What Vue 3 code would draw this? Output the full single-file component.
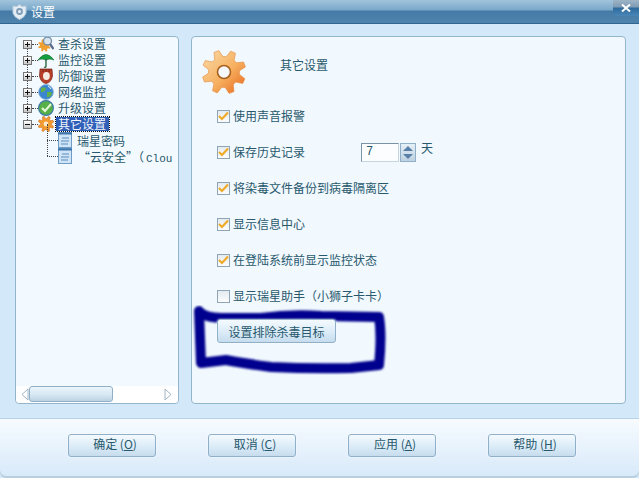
<script setup>
function gear(cx, cy, ro, ri, n) {
  const pts = []
  const step = (Math.PI * 2) / n
  for (let i = 0; i < n; i++) {
    const a = i * step - 0.25
    const list = [[ri, -0.5], [ro, -0.28], [ro, 0.02], [ri, 0.22]]
    for (const [r, o] of list) {
      const t = a + o * step
      pts.push((cx + r * Math.cos(t)).toFixed(1) + ',' + (cy + r * Math.sin(t)).toFixed(1))
    }
  }
  return pts.join(' ')
}
const bigGear = gear(22, 23, 22, 15.5, 8)
const smallGear = gear(8, 8, 8, 5.6, 8)
const nodes = [
  { label: '查杀设置', icon: 'scan' },
  { label: '监控设置', icon: 'umbrella' },
  { label: '防御设置', icon: 'glove' },
  { label: '网络监控', icon: 'globe' },
  { label: '升级设置', icon: 'update' }
]
const options = [
  { label: '使用声音报警', checked: true },
  { label: '保存历史记录', checked: true, spin: true },
  { label: '将染毒文件备份到病毒隔离区', checked: true },
  { label: '显示信息中心', checked: true },
  { label: '在登陆系统前显示监控状态', checked: true },
  { label: '显示瑞星助手（小狮子卡卡）', checked: false }
]
const buttons = [
  { label: '确定', key: 'O' },
  { label: '取消', key: 'C' },
  { label: '应用', key: 'A' },
  { label: '帮助', key: 'H' }
]
</script>

<template>
  <div class="window">
    <header class="titlebar">
      <svg class="title-icon" width="15" height="16" viewBox="0 0 15 16">
        <path d="M7.5 0.5 L10 2.5 L14 2 L14 9 Q13 13 7.5 15.5 Q2 13 1 9 L1 2 L5 2.5 Z" fill="#e4edf4" stroke="#b9cddd" />
        <circle cx="7.5" cy="7.5" r="3.4" fill="#7c9cb8" />
        <circle cx="7.5" cy="7.5" r="1.5" fill="#e8f0f6" />
      </svg>
      <span class="title-text">设置</span>
      <div class="close">
        <svg width="10" height="8" viewBox="0 0 10 8"><path d="M1 0.5 L9 7.5 M9 0.5 L1 7.5" stroke="#fff" stroke-width="2" /></svg>
      </div>
    </header>

    <main class="content">
      <aside class="tree-panel">
        <div class="tree">
          <div v-for="n in nodes" :key="n.label" class="node">
            <span class="expander"><i class="bar-h"></i><i class="bar-v"></i></span>
            <svg class="node-icon" width="16" height="16" viewBox="0 0 16 16">
              <template v-if="n.icon === 'scan'">
                <polygon :points="smallGear" fill="#f0a030" transform="translate(0 3) scale(.8)" />
                <circle cx="9.5" cy="5" r="4" fill="#d8e4ee" stroke="#7890a8" stroke-width="1.4" />
                <path d="M12 8 L15.5 13" stroke="#5a6a8a" stroke-width="2.2" />
              </template>
              <template v-else-if="n.icon === 'umbrella'">
                <path d="M0 8 Q8 -3 16 8 Q12 6 8 8 Q4 6 0 8 Z" fill="#14a040" stroke="#0b6a2a" stroke-width=".6" />
                <path d="M8 7 V14 Q8 16 6 15" stroke="#1c5a30" stroke-width="1.3" fill="none" />
              </template>
              <template v-else-if="n.icon === 'glove'">
                <path d="M2 1 L14 1 L14.5 8 Q13 15 8 15.5 Q3 15 1.5 8 Z" fill="#b8402a" stroke="#7a2416" stroke-width=".7" />
                <ellipse cx="8.4" cy="8" rx="3.4" ry="4" fill="#f6ece2" />
                <path d="M5 1 V4 M8 1 V4 M11 1 V4" stroke="#7a2416" />
              </template>
              <template v-else-if="n.icon === 'globe'">
                <circle cx="8" cy="8" r="7.4" fill="#3a86d0" stroke="#8ab0d0" stroke-width=".8" />
                <path d="M3 4 Q7 2 8 5 Q6 9 3 8 Z M9 8 Q14 7 14 10 Q12 14 9 13 Z" fill="#62b048" />
                <path d="M10 2 Q12 3 13 5" stroke="#fff" fill="none" />
              </template>
              <template v-else>
                <circle cx="8" cy="8" r="7.4" fill="#58b048" stroke="#3c7aa8" stroke-width="1.2" />
                <path d="M4 8 L7 11 L13 4" stroke="#e8f8d8" stroke-width="2" fill="none" />
              </template>
            </svg>
            <span class="node-label">{{ n.label }}</span>
          </div>

          <div class="node last-root">
            <span class="expander"><i class="bar-h"></i></span>
            <svg class="node-icon" width="16" height="16" viewBox="0 0 16 16">
              <polygon :points="smallGear" fill="#f09a30" stroke="#d0641a" stroke-width=".5" />
              <circle cx="8" cy="8" r="2.4" fill="#fbe8c8" />
            </svg>
            <span class="selected">其它设置</span>
          </div>

          <div class="leaf">
            <svg class="doc" width="14" height="16" viewBox="0 0 14 16"><rect x=".5" y=".5" width="13" height="15" fill="#cfe4f6" stroke="#6f9cc4" /><path d="M0 1.5 H14" stroke="#3f76ae" stroke-width="2" /><path d="M4 6 H11 M3 9 H11 M3 12 H10" stroke="#5a8cc0" /></svg>
            <span class="leaf-label">瑞星密码</span>
          </div>
          <div class="leaf">
            <svg class="doc" width="14" height="16" viewBox="0 0 14 16"><rect x=".5" y=".5" width="13" height="15" fill="#cfe4f6" stroke="#6f9cc4" /><path d="M0 1.5 H14" stroke="#3f76ae" stroke-width="2" /><path d="M4 6 H11 M3 9 H11 M3 12 H10" stroke="#5a8cc0" /></svg>
            <span class="leaf-label cloud">“云安全”（<span class="mono">Clou</span></span>
          </div>
        </div>

        <div class="hscroll">
          <svg width="8" height="13" viewBox="0 0 8 13"><path d="M7 1 L1 6.5 L7 12 Z" fill="#fff" stroke="#a0b4c4" /></svg>
          <div class="track"><div class="thumb"></div></div>
          <svg width="8" height="13" viewBox="0 0 8 13"><path d="M1 1 L7 6.5 L1 12 Z" fill="#fff" stroke="#a0b4c4" /></svg>
        </div>
      </aside>

      <section class="main-panel">
        <div class="head">
          <svg width="46" height="46" viewBox="0 0 46 46">
            <defs>
              <linearGradient id="gearFill" x1="0" y1="0" x2="1" y2="1">
                <stop offset="0" stop-color="#fbdcab" />
                <stop offset=".55" stop-color="#f6b060" />
                <stop offset="1" stop-color="#e8651a" />
              </linearGradient>
            </defs>
            <polygon :points="bigGear" fill="url(#gearFill)" stroke="#e88a3a" stroke-width=".6" />
            <circle cx="22" cy="23" r="6.5" fill="#f5f9fc" stroke="#a8601e" stroke-width="1.6" />
          </svg>
          <span class="head-title">其它设置</span>
        </div>

        <div class="options">
          <div v-for="o in options" :key="o.label" class="option">
            <span class="check">
              <svg v-if="o.checked" width="11" height="10" viewBox="0 0 11 10"><path d="M1 5 L4 8 L10 1.5" stroke="#eeaa28" stroke-width="2.2" fill="none" /></svg>
            </span>
            <span class="option-label">{{ o.label }}</span>
            <div v-if="o.spin" class="spin-wrap">
              <span class="spin-input">7</span>
              <span class="spin-btns">
                <svg width="16" height="19" viewBox="0 0 16 19">
                  <path d="M8 3 L13 8 H3 Z" fill="#5a7fa8" />
                  <path d="M3 11 H13 L8 16 Z" fill="#5a7fa8" />
                </svg>
              </span>
              <span class="spin-unit">天</span>
            </div>
          </div>
        </div>

        <button class="soft-btn exclude">设置排除杀毒目标</button>

        <svg class="scribble" width="200" height="70" viewBox="0 0 200 70">
          <defs><filter id="soft"><feGaussianBlur stdDeviation="0.8" /></filter></defs>
          <path d="M8 6 Q12 12 30 13 L70 13 Q100 9 130 11 L188 12 Q191 30 188 60 L160 63 Q120 64 80 62 Q50 58 35 55 L10 58 Q9 30 8 6 Z" fill="none" stroke="#00008e" stroke-width="10" stroke-linejoin="round" filter="url(#soft)" />
        </svg>
      </section>
    </main>

    <footer class="footer">
      <button v-for="b in buttons" :key="b.key" class="soft-btn action">
        {{ b.label }} (<u>{{ b.key }}</u>)
      </button>
    </footer>
  </div>
</template>

<style>
html, body { margin: 0; padding: 0; overflow: hidden; }
</style>

<style scoped>
.window {
  width: 639px;
  height: 478px;
  display: flex;
  flex-direction: column;
  background: #d3e8f9;
  font-family: "Noto Sans CJK SC", "Liberation Sans", sans-serif;
  font-size: 12px;
  color: #28586c;
  overflow: hidden;
}
.titlebar {
  position: relative;
  height: 24px;
  flex: none;
  display: flex;
  align-items: center;
  padding-left: 12px;
  gap: 4px;
  box-sizing: border-box;
  border-bottom: 1px solid #2f668f;
  background: linear-gradient(#a2c4dc 0, #7aa8ca 10px, #447ba6 11px, #4f83ad 100%);
}
.title-text { color: #fff; line-height: 16px; }
.close {
  position: absolute;
  right: 0;
  top: 0;
  width: 26px;
  height: 16px;
  border-radius: 0 0 0 4px;
  background: linear-gradient(#9db4c6 0, #7f9cb4 7px, #2f6a9c 8px, #4a86b8 100%);
  display: flex;
  align-items: center;
  justify-content: center;
}
.content {
  flex: 1;
  display: flex;
  gap: 12px;
  padding: 12px 13px 14px 15px;
  min-height: 0;
}
.tree-panel {
  width: 164px;
  flex: none;
  box-sizing: border-box;
  background: #f3faff;
  border: 1px solid #93b6cc;
  border-radius: 4px;
  display: flex;
  flex-direction: column;
  overflow: hidden;
}
.tree {
  flex: 1;
  margin-top: -1px;
  padding: 0 0 0 7px;
  overflow: hidden;
}
.node, .leaf {
  position: relative;
  height: 16px;
  display: flex;
  align-items: center;
  white-space: nowrap;
}
.expander {
  position: relative;
  width: 9px;
  height: 9px;
  box-sizing: border-box;
  border: 1px solid #777;
  background: linear-gradient(#fff, #c8c8c8);
  flex: none;
  z-index: 1;
}
.bar-h, .bar-v { position: absolute; background: #111; }
.bar-h { left: 1px; top: 3px; width: 5px; height: 1px; }
.bar-v { left: 3px; top: 1px; width: 1px; height: 5px; }
.node::before {
  content: "";
  position: absolute;
  left: 9px;
  top: 8px;
  width: 6px;
  border-top: 1px dotted #444;
}
.node::after {
  content: "";
  position: absolute;
  left: 4px;
  top: 8px;
  height: 16px;
  border-left: 1px dotted #444;
}
.node.last-root::after { display: none; }
.node-icon { margin-left: 6px; flex: none; }
.node-label { margin-left: 4px; line-height: 14px; }
.selected {
  margin-left: 2px;
  padding: 0 3px 0 2px;
  line-height: 14px;
  background: #2f5fb6;
  color: #f2f6ff;
  outline: 1px dotted #111;
  outline-offset: 0;
}
.leaf { padding-left: 35px; }
.leaf::before {
  content: "";
  position: absolute;
  left: 24px;
  top: 8px;
  width: 11px;
  border-top: 1px dotted #444;
}
.leaf::after {
  content: "";
  position: absolute;
  left: 24px;
  top: -8px;
  height: 16px;
  border-left: 1px dotted #444;
}
.doc { flex: none; }
.leaf-label { margin-left: 5px; }
.leaf-label.cloud { margin-left: 6px; }
.mono { font-family: "Liberation Mono", monospace; font-size: 11px; margin-left: 2px; }
.hscroll {
  flex: none;
  height: 17px;
  display: flex;
  align-items: center;
  padding: 0 6px 0 5px;
  background: #fff;
  border-radius: 0 0 3px 3px;
}
.track { flex: 1; height: 100%; }
.thumb {
  width: 84px;
  height: 16px;
  box-sizing: border-box;
  border: 1px solid #8fb0c8;
  border-radius: 3px;
  background: linear-gradient(#ecf5fb, #d7e7f3 55%, #bcd2e2);
}
.main-panel {
  position: relative;
  flex: 1;
  box-sizing: border-box;
  background: #f1f9ff;
  border: 1px solid #93b6cc;
  border-radius: 4px;
  padding: 12px 0 0 25px;
  display: flex;
  flex-direction: column;
  align-items: flex-start;
}
.head {
  display: flex;
  align-items: flex-start;
  margin-left: -15px;
  height: 59px;
}
.head-title { margin: 8px 0 0 32px; line-height: 16px; }
.options {
  display: flex;
  flex-direction: column;
  gap: 20px;
}
.option {
  height: 16px;
  display: flex;
  align-items: center;
  position: relative;
}
.check {
  width: 13px;
  height: 13px;
  box-sizing: border-box;
  border: 1px solid #8fa4b4;
  background: linear-gradient(#e4ebf0, #fbfcfd);
  display: flex;
  align-items: center;
  justify-content: center;
  flex: none;
}
.option-label { margin-left: 3px; line-height: 16px; white-space: nowrap; }
.spin-wrap {
  display: flex;
  align-items: center;
  margin-left: 56px;
}
.spin-input {
  width: 38px;
  height: 19px;
  box-sizing: border-box;
  background: #fcfdfe;
  border: 1px solid #c6d6e0;
  border-left: 1px solid #7a93a6;
  border-top: 1px solid #7a93a6;
  padding-left: 4px;
  line-height: 16px;
  font-family: "Liberation Mono", monospace;
  font-size: 12px;
}
.spin-btns {
  width: 16px;
  height: 19px;
  margin-left: 1px;
  box-sizing: border-box;
  display: block;
  background: linear-gradient(#e8f1f8, #bcd0e0);
  outline: 1px solid #8fb0c8;
  outline-offset: -1px;
}
.spin-unit { margin: -8px 0 0 5px; line-height: 16px; }
.soft-btn {
  font: inherit;
  color: inherit;
  box-sizing: border-box;
  border: 1px solid #8fb0c8;
  border-radius: 3px;
  background: linear-gradient(#f4fafe, #d9eaf7 60%, #c6dced);
  padding: 0;
  box-shadow: 0 0 2px #fff;
}
.exclude {
  width: 119px;
  height: 24px;
  margin-top: 15px;
  position: relative;
  z-index: 1;
}
.scribble {
  position: absolute;
  left: -1px;
  top: 268px;
  pointer-events: none;
}
.footer {
  flex: none;
  height: 60px;
  box-sizing: border-box;
  border-top: 1px solid #b5d2e6;
  border-radius: 0 0 6px 6px;
  background: linear-gradient(#f7fbff, #d7e9f9);
  box-shadow: inset 0 -2px 0 #b9cfdf;
  padding: 15px 0 0 68px;
  display: flex;
  align-items: flex-start;
  gap: 52px;
}
.action { width: 88px; height: 23px; line-height: 18px; padding: 0 0 3px 6px; }
</style>
